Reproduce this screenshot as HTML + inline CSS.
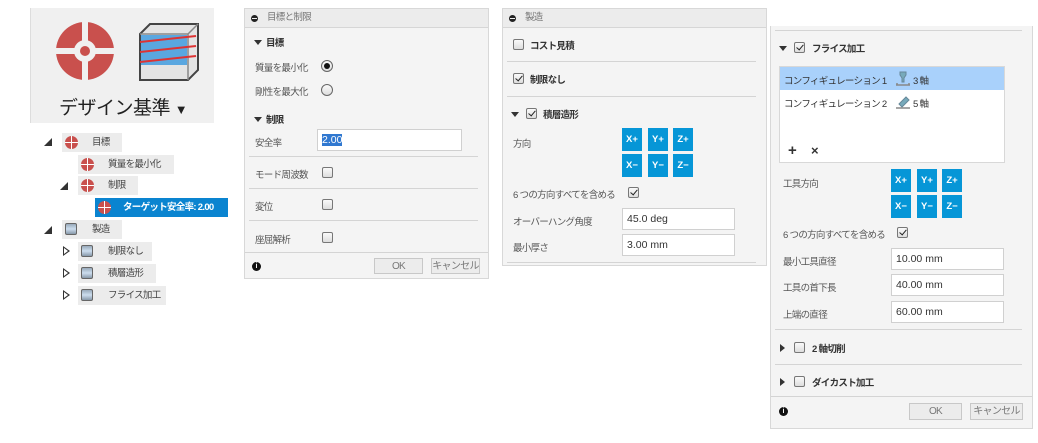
<!DOCTYPE html>
<html><head><meta charset="utf-8"><style>
*{margin:0;padding:0;box-sizing:border-box}
body{width:1038px;height:443px;background:#fff;position:relative;overflow:hidden;font-family:"Liberation Sans","Noto Sans CJK JP",sans-serif;font-size:9.5px;letter-spacing:-0.7px;color:#333}
div{white-space:nowrap}
.a{position:absolute;white-space:nowrap}
.panel{position:absolute;background:#f4f4f4;border:1px solid #d8d8d8}
.hdr{position:absolute;left:0;right:0;top:0;height:19px;background:#ececec;border-bottom:1px solid #d6d6d6;color:#777;font-size:9.5px;line-height:18px;padding-left:22px}
.hdr:before{content:"";position:absolute;left:6px;top:6px;width:7px;height:7px;border-radius:50%;background:#222}
.hdr:after{content:"";position:absolute;left:7px;top:9px;width:5px;height:1px;background:#eee}
.sep{position:absolute;height:1px;background:#d4d4d4}
.b{font-weight:bold}
.cb{position:absolute;width:11px;height:11px;border:1px solid #777;border-radius:2px;background:linear-gradient(#fafafa,#ddd)}
.cb.k:after{content:"";position:absolute;left:3px;top:0px;width:3px;height:6px;border:solid #222;border-width:0 1.5px 1.5px 0;transform:rotate(40deg)}
.rd{position:absolute;width:12px;height:12px;border:1px solid #666;border-radius:50%;background:linear-gradient(#fafafa,#ddd)}
.rd.k:after{content:"";position:absolute;left:2px;top:2px;width:6px;height:6px;border-radius:50%;background:#111}
.inp{position:absolute;background:#fff;border:1px solid #d0d0d0;font-size:10.5px;letter-spacing:0;line-height:20px;padding-left:4px;color:#333}
.bt{position:absolute;width:20px;height:23px;background:#0696d7;color:#fff;font-size:9.5px;letter-spacing:0;text-align:center;line-height:23px;font-weight:bold}
.btn{position:absolute;border:1px solid #c8c8c8;background:#ececec;color:#777;text-align:center;font-size:10px;line-height:15px}
.info{position:absolute;width:9px;height:9px;border-radius:50%;background:#111;color:#fff;font-size:7px;line-height:9px;text-align:center;font-weight:bold;letter-spacing:0}
.tri{position:absolute;width:0;height:0;border-left:4px solid transparent;border-right:4px solid transparent;border-top:5px solid #333}
.trr{position:absolute;width:0;height:0;border-top:4px solid transparent;border-bottom:4px solid transparent;border-left:5px solid #333}
.row{position:absolute;height:19px;background:#ececec;line-height:19px;color:#444}
.tg{position:absolute;width:13px;height:13px;border-radius:50%;background:#c9504d}
.tg:before{content:"";position:absolute;left:6px;top:0;width:1px;height:13px;background:#fff}
.tg:after{content:"";position:absolute;left:0;top:6px;width:13px;height:1px;background:#fff}
.cu{position:absolute;width:12px;height:12px;border:1px solid #666;background:linear-gradient(#9ab,#cde 50%,#89a);border-radius:2px}
.ex{position:absolute;width:0;height:0;border-left:8px solid transparent;border-bottom:8px solid #333}
.ed{position:absolute;width:0;height:0;border-top:5px solid transparent;border-bottom:5px solid transparent;border-left:7px solid #333}
.ed:after{content:"";position:absolute;left:-6px;top:-3px;border-top:3px solid transparent;border-bottom:3px solid transparent;border-left:4px solid #fff}
</style></head><body>

<!-- Left panel -->
<div class="a" style="left:30px;top:8px;width:184px;height:115px;background:#f0f0f0;border-left:1px solid #ddd"></div>
<svg class="a" style="left:54px;top:20px" width="62" height="62" viewBox="0 0 62 62">
<circle cx="31" cy="31" r="29" fill="#c9504d"/>
<rect x="28" y="0" width="6" height="62" fill="#f0f0f0"/>
<rect x="0" y="28" width="62" height="6" fill="#f0f0f0"/>
<circle cx="31" cy="31" r="11" fill="#f0f0f0"/>
<circle cx="31" cy="31" r="5" fill="#c9504d"/>
</svg>
<svg class="a" style="left:136px;top:20px" width="66" height="62" viewBox="0 0 66 62">
<path d="M4 14 L14 4 L62 4 L62 50 L52 60 L4 60 Z" fill="#e4e4e4" stroke="#444" stroke-width="2"/>
<path d="M4 14 L52 14 L62 4 M52 14 L52 60" fill="none" stroke="#888" stroke-width="1.5"/>
<rect x="5" y="15" width="46" height="30" fill="#5aa7e0"/>
<path d="M4 22 L60 16 M4 32 L60 26 M4 42 L60 36" stroke="#d33" stroke-width="2"/>
</svg>
<div class="a" style="left:59px;top:93px;font-size:19px;letter-spacing:-0.5px;color:#222">デザイン基準 <span style="font-size:13px">▼</span></div>

<div class="ex" style="left:44px;top:138px"></div>
<div class="row" style="left:62px;top:133px;width:60px"><span style="position:absolute;left:30px">目標</span></div><div class="tg" style="left:65px;top:136px"></div>
<div class="row" style="left:78px;top:155px;width:96px"><span style="position:absolute;left:30px">質量を最小化</span></div><div class="tg" style="left:81px;top:158px"></div>
<div class="ex" style="left:60px;top:182px"></div>
<div class="row" style="left:78px;top:176px;width:60px"><span style="position:absolute;left:30px">制限</span></div><div class="tg" style="left:81px;top:179px"></div>
<div class="row" style="left:95px;top:198px;width:133px;background:#0a84d0;color:#fff;font-weight:bold"><span style="position:absolute;left:28px">ターゲット安全率: 2.00</span></div><div class="tg" style="left:98px;top:201px"></div>
<div class="ex" style="left:44px;top:226px"></div>
<div class="row" style="left:62px;top:220px;width:60px"><span style="position:absolute;left:30px">製造</span></div><div class="cu" style="left:65px;top:223px"></div>
<div class="ed" style="left:63px;top:246px"></div>
<div class="row" style="left:78px;top:242px;width:74px"><span style="position:absolute;left:30px">制限なし</span></div><div class="cu" style="left:81px;top:245px"></div>
<div class="ed" style="left:63px;top:268px"></div>
<div class="row" style="left:78px;top:264px;width:78px"><span style="position:absolute;left:30px">積層造形</span></div><div class="cu" style="left:81px;top:267px"></div>
<div class="ed" style="left:63px;top:290px"></div>
<div class="row" style="left:78px;top:286px;width:88px"><span style="position:absolute;left:30px">フライス加工</span></div><div class="cu" style="left:81px;top:289px"></div>

<!-- Panel 2 -->
<div class="panel" style="left:244px;top:8px;width:245px;height:271px">
<div class="hdr">目標と制限</div>
<div class="tri" style="left:9px;top:31px"></div><div class="a b" style="left:21px;top:26px">目標</div>
<div class="a" style="left:10px;top:51px;color:#555">質量を最小化</div><div class="rd k" style="left:76px;top:51px"></div>
<div class="a" style="left:10px;top:75px;color:#555">剛性を最大化</div><div class="rd" style="left:76px;top:75px"></div>
<div class="tri" style="left:9px;top:108px"></div><div class="a b" style="left:21px;top:103px">制限</div>
<div class="a" style="left:10px;top:126px;color:#555">安全率</div>
<div class="inp" style="left:72px;top:120px;width:145px;height:22px"><span style="background:#3078d0;color:#fff">2.00</span></div>
<div class="sep" style="left:4px;right:10px;top:147px"></div>
<div class="a" style="left:10px;top:158px;color:#555">モード周波数</div><div class="cb" style="left:77px;top:158px"></div>
<div class="sep" style="left:4px;right:10px;top:179px"></div>
<div class="a" style="left:10px;top:190px;color:#555">変位</div><div class="cb" style="left:77px;top:190px"></div>
<div class="sep" style="left:4px;right:10px;top:211px"></div>
<div class="a" style="left:10px;top:223px;color:#555">座屈解析</div><div class="cb" style="left:77px;top:223px"></div>
<div class="sep" style="left:0;right:0;top:243px"></div>
<div class="info" style="left:7px;top:253px">i</div>
<div class="btn" style="left:129px;top:249px;width:49px;height:16px">OK</div>
<div class="btn" style="left:186px;top:249px;width:49px;height:16px">キャンセル</div>
</div>

<!-- Panel 3 -->
<div class="panel" style="left:502px;top:8px;width:265px;height:258px">
<div class="hdr">製造</div>
<div class="cb" style="left:10px;top:30px"></div><div class="a b" style="left:27px;top:29px">コスト見積</div>
<div class="sep" style="left:4px;right:10px;top:52px"></div>
<div class="cb k" style="left:10px;top:64px"></div><div class="a b" style="left:27px;top:63px">制限なし</div>
<div class="sep" style="left:4px;right:10px;top:87px"></div>
<div class="tri" style="left:8px;top:103px"></div><div class="cb k" style="left:23px;top:99px"></div><div class="a b" style="left:40px;top:98px">積層造形</div>
<div class="a" style="left:10px;top:127px;color:#555">方向</div>
<div class="bt" style="left:119px;top:119px">X+</div><div class="bt" style="left:145px;top:119px">Y+</div><div class="bt" style="left:170px;top:119px">Z+</div>
<div class="bt" style="left:119px;top:145px">X−</div><div class="bt" style="left:145px;top:145px">Y−</div><div class="bt" style="left:170px;top:145px">Z−</div>
<div class="a" style="left:10px;top:178px;color:#555">6 つの方向すべてを含める</div><div class="cb k" style="left:125px;top:178px"></div>
<div class="a" style="left:10px;top:205px;color:#555">オーバーハング角度</div><div class="inp" style="left:119px;top:199px;width:113px;height:22px">45.0 deg</div>
<div class="a" style="left:10px;top:231px;color:#555">最小厚さ</div><div class="inp" style="left:119px;top:225px;width:113px;height:22px">3.00 mm</div>
<div class="sep" style="left:4px;right:10px;top:253px"></div>
</div>

<!-- Panel 4 -->
<div class="panel" style="left:770px;top:26px;width:263px;height:403px;border-top:none">
<div class="sep" style="left:4px;right:10px;top:4px"></div>
<div class="tri" style="left:8px;top:20px"></div><div class="cb k" style="left:23px;top:16px"></div><div class="a b" style="left:41px;top:15px">フライス加工</div>
<div style="position:absolute;left:8px;top:40px;width:226px;height:97px;background:#fff;border:1px solid #d8d8d8">
<div style="position:absolute;left:0;right:0;top:0;height:23px;background:#a9d1fb"></div>
<div class="a" style="left:4px;top:6px">コンフィギュレーション 1</div>
<svg class="a" style="left:115px;top:4px" width="16" height="15"><path d="M5 1h6v3l-2 3v4h-2v-4l-2-3z" fill="#7ab" stroke="#689"/><path d="M1 14h14M2 12v2M14 12v2" stroke="#888" stroke-width="1.5"/></svg>
<div class="a" style="left:133px;top:6px">3 軸</div>
<div class="a" style="left:4px;top:29px">コンフィギュレーション 2</div>
<svg class="a" style="left:115px;top:27px" width="16" height="15"><path d="M4 10l7-7 3 3-7 7z" fill="#7ab" stroke="#689"/><path d="M1 14h14" stroke="#888" stroke-width="1.5"/></svg>
<div class="a" style="left:133px;top:29px">5 軸</div>
<div class="a b" style="left:8px;top:75px;font-size:15px">+</div>
<div class="a b" style="left:31px;top:76px;font-size:13px">×</div>
</div>
<div class="a" style="left:12px;top:150px;color:#555">工具方向</div>
<div class="bt" style="left:120px;top:143px">X+</div><div class="bt" style="left:146px;top:143px">Y+</div><div class="bt" style="left:171px;top:143px">Z+</div>
<div class="bt" style="left:120px;top:169px">X−</div><div class="bt" style="left:146px;top:169px">Y−</div><div class="bt" style="left:171px;top:169px">Z−</div>
<div class="a" style="left:12px;top:201px;color:#555">6 つの方向すべてを含める</div><div class="cb k" style="left:126px;top:201px"></div>
<div class="a" style="left:12px;top:228px;color:#555">最小工具直径</div><div class="inp" style="left:120px;top:222px;width:113px;height:22px">10.00 mm</div>
<div class="a" style="left:12px;top:254px;color:#555">工具の首下長</div><div class="inp" style="left:120px;top:248px;width:113px;height:22px">40.00 mm</div>
<div class="a" style="left:12px;top:281px;color:#555">上端の直径</div><div class="inp" style="left:120px;top:275px;width:113px;height:22px">60.00 mm</div>
<div class="sep" style="left:4px;right:10px;top:303px"></div>
<div class="trr" style="left:9px;top:318px"></div><div class="cb" style="left:23px;top:316px"></div><div class="a b" style="left:41px;top:315px">2 軸切削</div>
<div class="sep" style="left:4px;right:10px;top:338px"></div>
<div class="trr" style="left:9px;top:352px"></div><div class="cb" style="left:23px;top:350px"></div><div class="a b" style="left:41px;top:349px">ダイカスト加工</div>
<div class="sep" style="left:0;right:0;top:370px"></div>
<div class="info" style="left:8px;top:381px">i</div>
<div class="btn" style="left:138px;top:377px;width:53px;height:17px">OK</div>
<div class="btn" style="left:199px;top:377px;width:53px;height:17px">キャンセル</div>
</div>
</body></html>
